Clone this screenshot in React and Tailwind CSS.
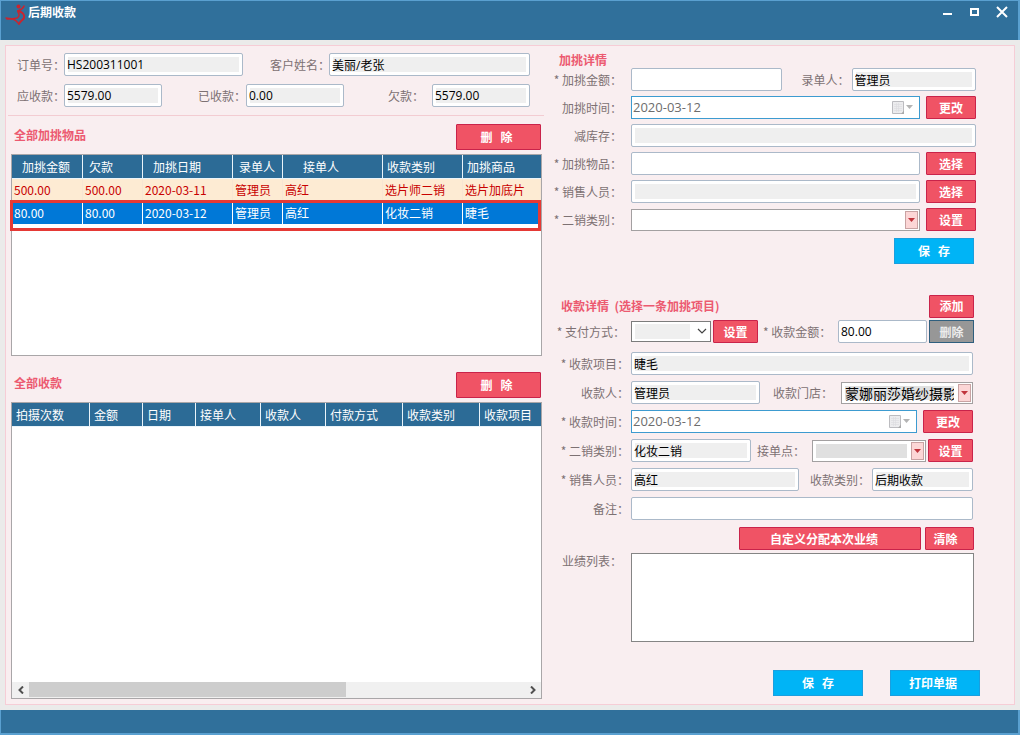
import React from "react";

const CJK = "font-['Noto_Sans_CJK_SC',sans-serif]";
const VALUE = "font-['Open_Sans','Noto_Sans_CJK_SC',sans-serif]";

function Label({ htmlFor, required, className = "", children }) {
  return (
    <label htmlFor={htmlFor} className={`shrink-0 whitespace-nowrap text-xs leading-4 text-[#7d7173] ${className}`}>
      {required ? "* " : ""}
      {children}：
    </label>
  );
}

function TextField({ id, value = "", readOnly = false, className = "" }) {
  const fill = readOnly ? "bg-[#efefef] shadow-[inset_0_0_0_3px_#fff]" : "bg-white";
  return (
    <input
      id={id}
      type="text"
      defaultValue={value}
      readOnly={readOnly}
      className={`h-[23px] min-w-0 rounded-xs border border-[#abb9c9] px-0.5 text-xs text-black outline-none ${VALUE} ${fill} ${className}`}
    />
  );
}

function DateField({ id, value }) {
  return (
    <div className="flex h-[23px] min-w-0 flex-1 items-center border border-[#3d9bd0] bg-white pr-1.5 pl-px">
      <input
        id={id}
        type="text"
        defaultValue={value}
        className={`min-w-0 flex-1 bg-transparent pb-0.5 text-[13px] leading-4 text-[#6d6d6d] outline-none ${VALUE}`}
      />
      <button type="button" aria-label="选择日期" className="flex items-center">
        <svg width="21" height="13" viewBox="0 0 21 13">
          <path d="M.5 .5h11v12h-11z" fill="#ececee" stroke="#bcbcc0" />
          <path d="M2 3.500h8M2 5.500h8M2 7.500h8M2 9.500h8M4.500 2v9M6.500 2v9" stroke="#dcdcdf" strokeWidth=".6" />
          <path d="M12 9.500L9 13h3z" fill="#aaa" />
          <path d="M14 4h7l-3.500 4z" fill="#b4b4b4" />
        </svg>
      </button>
    </div>
  );
}

function Combo({ id, value = "", fill = "bg-white", className = "" }) {
  return (
    <div className={`relative h-[22px] min-w-0 bg-white ${className}`}>
      <select
        id={id}
        defaultValue={value}
        className={`block h-full w-full appearance-none border border-[#a3a0a1] bg-clip-content py-0 pr-[18px] pl-[3px] text-sm text-black shadow-[inset_0_0_0_3px_#fff] outline-none ${CJK} ${fill}`}
      >
        <option value={value}>{value}</option>
      </select>
      <span className="pointer-events-none absolute inset-y-0.5 right-0.5 flex w-[13px] items-center justify-center border border-[#c9a3a3] bg-[#fcd6d6]">
        <svg width="7" height="4" viewBox="0 0 7 4">
          <path d="M0 0h7L3.500 4z" fill="#c0343c" />
        </svg>
      </span>
    </div>
  );
}

function RedButton({ className = "", children }) {
  return (
    <button
      type="button"
      className={`h-[23px] shrink-0 whitespace-pre rounded-[1px] border border-[#c9234a] bg-[#f05365] text-xs leading-4 font-bold text-white ${className}`}
    >
      {children}
    </button>
  );
}

function BlueButton({ className = "", children }) {
  return (
    <button
      type="button"
      className={`h-[26px] whitespace-pre border border-[#1a9fdf] bg-[#00b4f6] text-xs leading-4 font-bold text-white ${className}`}
    >
      {children}
    </button>
  );
}

function ListTitle({ title }) {
  return (
    <div className="flex h-[26px] items-center justify-between pr-px pl-[3px]">
      <h2 className="pb-1 text-xs leading-4 font-bold text-[#ec5a70]">{title}</h2>
      <RedButton className="h-[26px] w-[85px] pr-1">{"删   除"}</RedButton>
    </div>
  );
}

const itemColumns = [
  { name: "加挑金额", col: "w-[71px]", pad: "pl-2.5" },
  { name: "欠款", col: "w-[60px]", pad: "pl-1.5" },
  { name: "加挑日期", col: "w-[90px]", pad: "pl-2.5" },
  { name: "录单人", col: "w-[50px]", pad: "pl-1.5" },
  { name: "接单人", col: "w-[100px]", pad: "pl-5" },
  { name: "收款类别", col: "w-[80px]", pad: "pl-1" },
  { name: "加挑商品", col: "w-[78px]", pad: "pl-1" },
];

const items = [
  ["500.00", "500.00", "2020-03-11", "管理员", "高红", "选片师二销", "选片加底片"],
  ["80.00", "80.00", "2020-03-12", "管理员", "高红", "化妆二销", "睫毛"],
];

const paymentColumns = [
  { name: "拍摄次数", col: "w-[78px]", pad: "pl-1" },
  { name: "金额", col: "w-[53px]", pad: "pl-1" },
  { name: "日期", col: "w-[53px]", pad: "pl-1" },
  { name: "接单人", col: "w-[65px]", pad: "pl-1" },
  { name: "收款人", col: "w-[65px]", pad: "pl-1" },
  { name: "付款方式", col: "w-[77px]", pad: "pl-1" },
  { name: "收款类别", col: "w-[77px]", pad: "pl-1" },
  { name: "收款项目", col: "w-[61px]", pad: "pl-1" },
];

function DataTable({ columns, rows = [] }) {
  return (
    <table className="w-full table-fixed border-separate border-spacing-0 text-xs leading-4 whitespace-nowrap">
      <colgroup>
        {columns.map((c) => (
          <col key={c.name} className={c.col} />
        ))}
      </colgroup>
      <thead>
        <tr className="h-6">
          {columns.map((c) => (
            <th
              key={c.name}
              className={`border-r border-b border-[#eaf4fa] bg-[#2c6b96] p-0 text-left font-normal text-white last:border-r-0 ${c.pad}`}
            >
              {c.name}
            </th>
          ))}
        </tr>
      </thead>
      <tbody>
        {rows.map((row, r) => (
          <tr key={r} className={r === 1 ? "h-[23px] text-white" : "h-[23px] text-[#c80000]"}>
            {row.map((cell, c) => (
              <td
                key={c}
                className={`border-b p-0 pl-0.5 ${
                  r === 1
                    ? "border-r border-white bg-[#0078d7] last:border-r-0"
                    : "border-r border-[#f7e6d3] bg-[#fdebd3]"
                }`}
              >
                {cell}
              </td>
            ))}
          </tr>
        ))}
      </tbody>
    </table>
  );
}

export default function App() {
  return (
    <div className={`flex min-h-screen flex-col bg-[#ebebea] ${CJK}`}>
      <header className="flex h-10 items-start justify-between border-t border-r-2 border-l border-[#5aa0d0] bg-[#30709b] pt-[3px] pr-2.5 pl-1">
        <div className="flex items-start gap-px">
          <svg width="22" height="22" viewBox="0 0 22 22" fill="none" stroke="#c9252f" strokeLinecap="round">
            <circle cx="13.500" cy="2.500" r="2" fill="#c9252f" stroke="none" />
            <path d="M19 2c-1 3-4 4-6 5" strokeWidth="1.600" />
            <path d="M13 7c4 1 7 3 6 7-1 2-4 3-5 6" strokeWidth="2" />
            <path d="M13 8c2 3 1 5-1 6-3 1-7 1-11 0" strokeWidth="1.400" />
            <path d="M2 15c5-1 9 1 11 4" strokeWidth="1.400" />
          </svg>
          <h1 className="text-xs leading-4 font-bold text-white">后期收款</h1>
        </div>
        <div className="flex items-center gap-[15px] pt-0.5">
          <button type="button" aria-label="最小化">
            <svg width="12" height="12" viewBox="0 0 12 12">
              <path d="M1 8h9" stroke="#fff" strokeWidth="2" />
            </svg>
          </button>
          <button type="button" aria-label="最大化">
            <svg width="12" height="12" viewBox="0 0 12 12">
              <path d="M2 3h7v6H2z" fill="none" stroke="#fff" strokeWidth="2" />
            </svg>
          </button>
          <button type="button" aria-label="关闭">
            <svg width="12" height="12" viewBox="0 0 12 12">
              <path d="M1 1l10 10M11 1L1 11" stroke="#fff" strokeWidth="2" />
            </svg>
          </button>
        </div>
      </header>

      <main className="flex flex-1 flex-col p-[5px]">
        <div className="grid flex-1 grid-cols-[540fr_468fr] border border-[#f6cdd6] bg-[#f9eef0]">
          <section className="flex min-w-0 flex-col">
            <div className="mx-0.5 flex flex-col gap-2 border-b border-[#f3ccd2] pt-[7px] pr-3.5 pb-2 pl-[9px]">
              <div className="grid grid-cols-[47px_179fr_86px_201fr] items-center">
                <Label htmlFor="order">订单号</Label>
                <TextField id="order" value="HS200311001" readOnly />
                <Label htmlFor="customer" className="pl-[27px]">客户姓名</Label>
                <TextField id="customer" value="美丽/老张" readOnly />
              </div>
              <div className="grid grid-cols-[47px_98fr_84px_98fr_88px_98fr] items-center">
                <Label htmlFor="due">应收款</Label>
                <TextField id="due" value="5579.00" readOnly />
                <Label htmlFor="paid" className="pl-9">已收款</Label>
                <TextField id="paid" value="0.00" readOnly />
                <Label htmlFor="owed" className="pl-11">欠款</Label>
                <TextField id="owed" value="5579.00" readOnly />
              </div>
            </div>

            <div className="flex flex-1 flex-col pt-2 pr-1 pb-[5px] pl-[5px]">
              <ListTitle title="全部加挑物品" />
              <div className="relative mt-1 mb-4 h-[202px] border border-[#a9a6a8] bg-white">
                <DataTable columns={itemColumns} rows={items} />
                <div className="pointer-events-none absolute top-[45px] right-0 -left-0.5 h-[31px] border-3 border-[#e53935]" />
              </div>

              <ListTitle title="全部收款" />
              <div className="mt-1 flex flex-1 flex-col justify-between border border-[#a9a6a8] bg-white">
                <DataTable columns={paymentColumns} />
                <div className="flex h-4 items-center bg-[#f0f0f0]">
                  <button type="button" aria-label="向左滚动" className="flex h-full w-[17px] shrink-0 items-center justify-center">
                    <svg width="8" height="8" viewBox="0 0 8 8">
                      <path d="M6 .5L2.500 4 6 7.500" fill="none" stroke="#505050" strokeWidth="2" />
                    </svg>
                  </button>
                  <div className="h-full flex-1">
                    <div className="h-[15px] w-[64%] bg-[#cdcdcd]" />
                  </div>
                  <button type="button" aria-label="向右滚动" className="flex h-full w-[17px] shrink-0 items-center justify-center">
                    <svg width="8" height="8" viewBox="0 0 8 8">
                      <path d="M2 .5L5.500 4 2 7.500" fill="none" stroke="#505050" strokeWidth="2" />
                    </svg>
                  </button>
                </div>
              </div>
            </div>
          </section>

          <section className="flex min-w-0 flex-col pt-1.5 pr-[38px]">
            <h2 className="pl-[13px] text-xs leading-4 font-bold text-[#ec5a70]">加挑详情</h2>
            <form className="flex flex-col gap-[5px]">
              <div className="grid grid-cols-[85px_150fr_70px_124fr] items-center">
                <Label htmlFor="addAmount" required className="pr-[9px] text-right">加挑金额</Label>
                <TextField id="addAmount" />
                <Label htmlFor="recorder" className="pl-5">录单人</Label>
                <TextField id="recorder" value="管理员" readOnly />
              </div>
              <div className="flex items-center">
                <Label htmlFor="addTime" className="w-[85px] pr-[9px] text-right">加挑时间</Label>
                <DateField id="addTime" value="2020-03-12" />
                <RedButton className="ml-1.5 w-[50px]">更改</RedButton>
              </div>
              <div className="flex items-center">
                <Label htmlFor="stock" className="w-[85px] pr-[9px] text-right">减库存</Label>
                <TextField id="stock" readOnly className="flex-1" />
              </div>
              <div className="flex items-center">
                <Label htmlFor="addItem" required className="w-[85px] pr-[9px] text-right">加挑物品</Label>
                <TextField id="addItem" className="flex-1" />
                <RedButton className="ml-1.5 w-[50px]">选择</RedButton>
              </div>
              <div className="flex items-center">
                <Label htmlFor="seller" required className="w-[85px] pr-[9px] text-right">销售人员</Label>
                <TextField id="seller" readOnly className="flex-1" />
                <RedButton className="ml-1.5 w-[50px]">选择</RedButton>
              </div>
              <div className="flex items-center">
                <Label htmlFor="addType" required className="w-[85px] pr-[9px] text-right">二销类别</Label>
                <Combo id="addType" className="flex-1" />
                <RedButton className="ml-1.5 w-[50px]">设置</RedButton>
              </div>
              <div className="flex justify-end pt-0.5 pr-0.5">
                <BlueButton className="w-20">{"保   存"}</BlueButton>
              </div>
            </form>

            <form className="mt-[30px] flex flex-col">
              <div className="flex h-6 items-center justify-between pr-0.5 pl-[15px]">
                <h2 className="text-xs leading-4 font-bold text-[#ec5a70]">收款详情&nbsp; (选择一条加挑项目)</h2>
                <RedButton className="h-6 w-[45px]">添加</RedButton>
              </div>
              <div className="mt-0.5 grid h-[23px] grid-cols-[85px_80fr_47px_80px_89fr_47px] items-center pr-0.5">
                <Label htmlFor="payMethod" required className="pr-1.5 text-right">支付方式</Label>
                <div className="relative h-[21px] min-w-0 bg-white">
                  <select
                    id="payMethod"
                    className="block h-full w-full appearance-none border border-[#7c7c7c] bg-[#efefef] bg-clip-content py-0.5 pr-5 pl-[3px] text-xs outline-none"
                  >
                    <option value=""></option>
                  </select>
                  <svg className="pointer-events-none absolute top-[7px] right-1" width="10" height="7" viewBox="0 0 10 7">
                    <path d="M1 1l4 4 4-4" fill="none" stroke="#444" strokeWidth="1.200" />
                  </svg>
                </div>
                <RedButton className="ml-0.5">设置</RedButton>
                <Label htmlFor="payAmount" required className="pl-[5px]">收款金额</Label>
                <TextField id="payAmount" value="80.00" />
                <button
                  type="button"
                  className="ml-0.5 h-[23px] border border-[#2f5f7e] bg-[#979797] text-xs leading-4 font-bold text-[#ececec]"
                >
                  删除
                </button>
              </div>

              <div className="mt-[9px] flex flex-col gap-1.5 pr-[3px]">
                <div className="flex items-center">
                  <Label htmlFor="payItem" required className="w-[85px] pr-0.5 text-right">收款项目</Label>
                  <TextField id="payItem" value="睫毛" readOnly className="flex-1" />
                </div>
                <div className="grid grid-cols-[85px_129fr_81px_132fr] items-center">
                  <Label htmlFor="payee" className="pr-0.5 text-right">收款人</Label>
                  <TextField id="payee" value="管理员" readOnly />
                  <Label htmlFor="store" className="pl-[13px]">收款门店</Label>
                  <Combo id="store" value="蒙娜丽莎婚纱摄影" fill="bg-[#e0e0e0]" />
                </div>
                <div className="flex items-center">
                  <Label htmlFor="payTime" required className="w-[85px] pr-0.5 text-right">收款时间</Label>
                  <DateField id="payTime" value="2020-03-12" />
                  <RedButton className="ml-1.5 w-[50px]">更改</RedButton>
                </div>
                <div className="grid grid-cols-[85px_120fr_61px_114fr_47px] items-center">
                  <Label htmlFor="payType" required className="pr-0.5 text-right">二销类别</Label>
                  <TextField id="payType" value="化妆二销" readOnly />
                  <Label htmlFor="point" className="pl-1.5">接单点</Label>
                  <Combo id="point" fill="bg-[#e0e0e0]" />
                  <RedButton className="ml-0.5">设置</RedButton>
                </div>
                <div className="grid grid-cols-[85px_168fr_73px_101fr] items-center">
                  <Label htmlFor="paySeller" required className="pr-0.5 text-right">销售人员</Label>
                  <TextField id="paySeller" value="高红" readOnly />
                  <Label htmlFor="payCategory" className="pl-[11px]">收款类别</Label>
                  <TextField id="payCategory" value="后期收款" readOnly />
                </div>
                <div className="flex items-center">
                  <Label htmlFor="remark" className="w-[85px] pr-0.5 text-right">备注</Label>
                  <TextField id="remark" className="flex-1" />
                </div>
              </div>

              <div className="mt-[7px] flex justify-end gap-1 pr-0.5">
                <RedButton className="w-[182px] pr-3">自定义分配本次业绩</RedButton>
                <RedButton className="w-[49px] pr-2">清除</RedButton>
              </div>
              <div className="mt-[3px] flex items-start pr-0.5">
                <Label htmlFor="results" className="w-[85px] pr-[9px] text-right">业绩列表</Label>
                <textarea
                  id="results"
                  className="block h-[89px] min-w-0 flex-1 resize-none border border-[#858585] bg-white p-1 text-xs outline-none"
                />
              </div>
            </form>

            <div className="-mr-1 mt-7 flex justify-end gap-[27px]">
              <BlueButton className="w-[90px]">{"保   存"}</BlueButton>
              <BlueButton className="w-[90px] pr-1">打印单据</BlueButton>
            </div>
          </section>
        </div>
      </main>

      <footer className="h-[25px] border-r-2 border-b-2 border-l border-[#5aa0d0] bg-[#30709b]" />
    </div>
  );
}
